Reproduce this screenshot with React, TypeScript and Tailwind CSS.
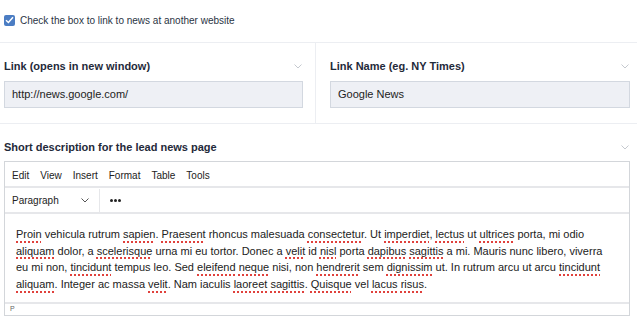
import React from 'react';

const Chevron: React.FC<{ className?: string }> = ({ className }) => (
  <svg width="8" height="5" viewBox="0 0 8 5" className={className} fill="none">
    <path d="M0.5 0.5 L4 4 L7.5 0.5" stroke="currentColor" strokeWidth="1" />
  </svg>
);

// words flagged by the spell checker get a red dotted underline
const Sp: React.FC<{ children: React.ReactNode }> = ({ children }) => (
  <span className="underline decoration-dotted decoration-[#e0413c] decoration-[1.5px] underline-offset-[3px]">
    {children}
  </span>
);

const App: React.FC = () => {
  return (
    <div className="w-[637px] h-[324px] bg-white text-[#1f2a3a] font-['Liberation_Sans',Arial,sans-serif] overflow-hidden">
      {/* checkbox row */}
      <div className="h-[42px] flex items-center pl-[4px] pb-[2px]">
        <span className="w-[11px] h-[11px] rounded-[2px] bg-[#4b7dc3] flex items-center justify-center">
          <svg width="9" height="8" viewBox="0 0 9 8" fill="none">
            <path d="M1 4.2 L3.4 6.5 L8 1.2" stroke="white" strokeWidth="1.5" />
          </svg>
        </span>
        <span className="ml-[5px] text-[10px] text-[#2a3444]">Check the box to link to news at another website</span>
      </div>

      {/* link fields */}
      <div className="grid grid-cols-[316px_1fr] border-t border-b border-[#eceef2] h-[82px]">
        <div className="border-r border-[#eceef2] pl-[4px] pr-[12px] pt-[15px]">
          <div className="flex items-center justify-between h-4">
            <span className="text-[11px] font-bold">Link (opens in new window)</span>
            <Chevron className="text-[#c5c9cf] mr-[1px]" />
          </div>
          <div className="mt-[7px] h-[27px] bg-[#eef0f5] border border-[#d3d8e0] flex items-center px-[7px] text-[11px] text-[#222]">
            http://news.google.com/
          </div>
        </div>
        <div className="pl-[14px] pr-[7px] pt-[15px]">
          <div className="flex items-center justify-between h-4">
            <span className="text-[11px] font-bold">Link Name (eg. NY Times)</span>
            <Chevron className="text-[#c5c9cf] mr-[1px]" />
          </div>
          <div className="mt-[7px] h-[27px] bg-[#eef0f5] border border-[#d3d8e0] flex items-center px-[7px] text-[11px] text-[#222]">
            Google News
          </div>
        </div>
      </div>

      {/* description editor */}
      <div className="pl-[4px] pr-[7px] pt-[15px]">
        <div className="flex items-center justify-between h-4">
          <span className="text-[11px] font-bold">Short description for the lead news page</span>
          <Chevron className="text-[#c5c9cf] mr-[1px]" />
        </div>
        <div className="mt-[6px] border border-[#d3d6da] text-[#222]">
          <div className="h-[26px] flex items-center pl-[1.5px] pt-[2px] text-[10px] border-b-2 border-[#e6e7ea]">
            {['Edit', 'View', 'Insert', 'Format', 'Table', 'Tools'].map((m) => (
              <span key={m} className="px-[5.5px]">{m}</span>
            ))}
          </div>
          <div className="h-[26px] flex items-center pt-[1px] text-[10px] border-b-2 border-[#e6e7ea]">
            <div className="w-[95px] h-full flex items-center justify-between pl-[7px] pr-[10px] border-r border-[#e6e7ea]">
              <span>Paragraph</span>
              <Chevron className="text-[#555]" />
            </div>
            <span className="ml-[10px] flex gap-[1.5px]">
              <span className="w-[2.5px] h-[2.5px] rounded-full bg-[#222]" />
              <span className="w-[2.5px] h-[2.5px] rounded-full bg-[#222]" />
              <span className="w-[2.5px] h-[2.5px] rounded-full bg-[#222]" />
            </span>
          </div>
          <div className="h-[88px] pl-[11px] pt-[12px] text-[11px] leading-[16.7px] whitespace-nowrap">
            <div>
              <Sp>Proin</Sp> vehicula rutrum <Sp>sapien</Sp>. <Sp>Praesent</Sp> rhoncus malesuada <Sp>consectetur</Sp>. Ut <Sp>imperdiet</Sp>, <Sp>lectus</Sp> ut <Sp>ultrices</Sp> porta, mi odio
            </div>
            <div>
              <Sp>aliquam</Sp> dolor, a <Sp>scelerisque</Sp> urna mi eu tortor. Donec a <Sp>velit</Sp> id <Sp>nisl</Sp> porta <Sp>dapibus</Sp> <Sp>sagittis</Sp> a mi. Mauris nunc libero, viverra
            </div>
            <div>
              eu mi non, <Sp>tincidunt</Sp> tempus leo. Sed <Sp>eleifend</Sp> <Sp>neque</Sp> nisi, non <Sp>hendrerit</Sp> sem <Sp>dignissim</Sp> ut. In rutrum arcu ut arcu <Sp>tincidunt</Sp>
            </div>
            <div>
              <Sp>aliquam</Sp>. Integer ac massa <Sp>velit</Sp>. Nam iaculis <Sp>laoreet</Sp> <Sp>sagittis</Sp>. <Sp>Quisque</Sp> vel <Sp>lacus</Sp> <Sp>risus</Sp>.
            </div>
          </div>
          <div className="h-[13px] border-t-2 border-[#e6e7ea] pl-[5px] flex items-center text-[7px] text-[#666]">
            P
          </div>
        </div>
      </div>
    </div>
  );
};

export default App;
